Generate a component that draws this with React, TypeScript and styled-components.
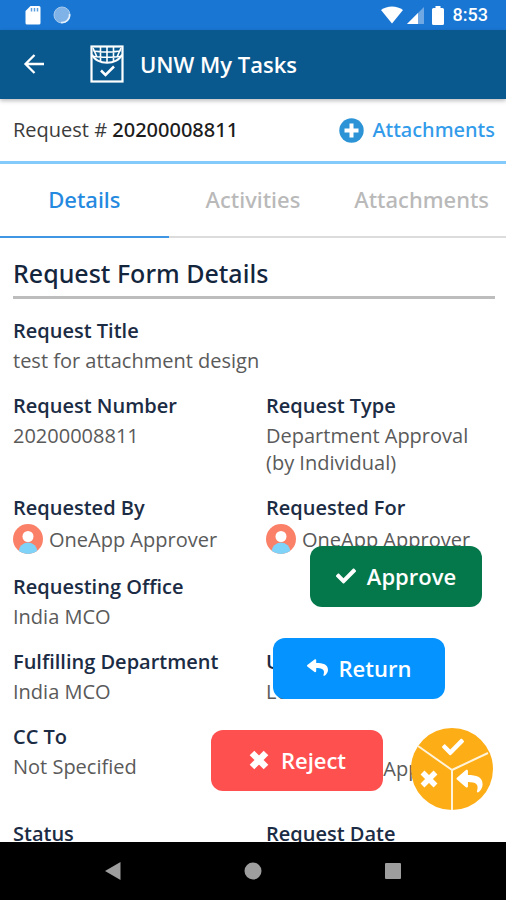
import React from 'react';
import styled, { createGlobalStyle } from 'styled-components';

const GlobalStyle = createGlobalStyle`
  *, *::before, *::after { box-sizing: border-box; }
  body { margin: 0; background: #fff; }
  button { border: 0; padding: 0; background: none; font: inherit; color: inherit; cursor: pointer; }
`;

const mediumFont = "'Noto Sans', 'Open Sans', sans-serif";

const Screen = styled.div`
  display: flex;
  flex-direction: column;
  height: 100vh;
  overflow: hidden;
  background: #fff;
  font-family: 'Open Sans', 'Noto Sans', sans-serif;
  color: #5a5a5a;
`;

const StatusBar = styled.div`
  flex: none;
  display: flex;
  align-items: center;
  justify-content: space-between;
  height: 30px;
  padding: 0 18px 0 25px;
  background: #1976d2;
  color: #fff;
`;

const StatusGroup = styled.div<{ $gap: number }>`
  display: flex;
  align-items: center;
  gap: ${({ $gap }) => $gap}px;
`;

const Clock = styled.time`
  padding-left: 5px;
  font: 500 18px/30px Roboto, sans-serif;
`;

const AppBar = styled.header`
  flex: none;
  position: relative;
  display: flex;
  align-items: center;
  height: 69px;
  padding: 0 20px 2px;
  background: #09588e;
  color: #fff;
  box-shadow: 0 2px 4px rgba(0, 0, 0, 0.25);
`;

const BackButton = styled.button`
  display: flex;
  padding: 3px;
  margin-right: 42px;
`;

const AppTitle = styled.h1`
  margin: 0 0 0 16px;
  font-size: 22px;
  line-height: 30px;
  font-weight: 600;
`;

const RequestBar = styled.div`
  flex: none;
  display: flex;
  align-items: center;
  justify-content: space-between;
  height: 65px;
  padding: 0 11px 0 13px;
  border-bottom: 3px solid #84cafa;
  font-size: 20px;
  line-height: 28px;
  color: #3c3c3c;
`;

const RequestId = styled.strong`
  font-family: ${mediumFont};
  font-weight: 500;
  color: #1c1c1c;
`;

const AddButton = styled.button`
  display: flex;
  align-items: center;
  gap: 8px;
  color: #329bea;
  font-family: ${mediumFont};
  font-weight: 500;
`;

const Tabs = styled.div`
  flex: none;
  display: grid;
  grid-template-columns: repeat(3, 1fr);
  height: 74px;
`;

const Tab = styled.button<{ $active?: boolean }>`
  padding-bottom: 2px;
  border-bottom: 2px solid ${({ $active }) => ($active ? '#3f97e3' : '#dcdcdc')};
  color: ${({ $active }) => ($active ? '#2489df' : '#b9b9b9')};
  font-family: ${mediumFont};
  font-size: 22px;
  line-height: 30px;
  font-weight: 500;
`;

const Body = styled.div`
  flex: 1;
  min-height: 0;
  position: relative;
`;

const Scroller = styled.main`
  height: 100%;
  overflow-y: auto;
  scrollbar-width: none;
  padding: 17px 11px 0 13px;
`;

const SectionTitle = styled.h2`
  margin: 0 0 18px;
  padding-bottom: 5px;
  border-bottom: 3px solid #bdbdbd;
  font-family: ${mediumFont};
  font-size: 25px;
  line-height: 36px;
  font-weight: 500;
  color: #14263d;
`;

const Fields = styled.dl`
  display: grid;
  grid-template-columns: 1fr 1fr;
  column-gap: 24px;
  row-gap: 18px;
  margin: 0;
`;

const Field = styled.div<{ $wide?: boolean; $minHeight?: number }>`
  grid-column: ${({ $wide }) => ($wide ? '1 / -1' : 'auto')};
  min-height: ${({ $minHeight = 0 }) => $minHeight}px;
`;

const Label = styled.dt`
  font-size: 20px;
  line-height: 27px;
  font-weight: 600;
  color: #1b2c44;
`;

const Value = styled.dd`
  display: flex;
  align-items: center;
  gap: 6px;
  margin: 3px 0 0;
  font-size: 20px;
  line-height: 27px;
  white-space: pre-line;
`;

const Actions = styled.div`
  position: absolute;
  right: 24px;
  bottom: 51px;
  display: flex;
  flex-direction: column;
  align-items: flex-end;
  gap: 31px;
`;

const ActionButton = styled.button<{ $color: string; $inset: number }>`
  display: flex;
  align-items: center;
  justify-content: center;
  gap: 11px;
  width: 172px;
  height: 61px;
  padding-bottom: 2px;
  margin-right: ${({ $inset }) => $inset}px;
  border-radius: 12px;
  background: ${({ $color }) => $color};
  color: #fff;
  font-size: 22px;
  line-height: 30px;
  font-weight: 600;
`;

const Fab = styled.button`
  position: absolute;
  right: 13px;
  bottom: 32px;
  display: flex;
  border-radius: 50%;
`;

const NavBar = styled.nav`
  flex: none;
  display: flex;
  align-items: center;
  justify-content: center;
  gap: 116px;
  height: 58px;
  background: #000;
  color: #9e9e9e;
`;

const NavButton = styled.button`
  display: flex;
  padding: 3px;
`;

const CHECK =
  'M173.9 439.4l-166.4-166.4c-10-10-10-26.2 0-36.2l36.2-36.2c10-10 26.2-10 36.2 0L192 312.7 432.1 72.6c10-10 26.2-10 36.2 0l36.2 36.2c10 10 10 26.2 0 36.2l-294.4 294.4c-10 10-26.2 10-36.2 0z';
const REPLY =
  'M8.3 189.8L184.3 37.9C199.7 24.5 224 35.3 224 56v80c160.600 1.800 288 34 288 186.300 0 61.400-39.600 122.300-83.300 154.100-13.700 9.900-33.100-2.500-28.100-18.600C445.900 312.900 379.100 274.400 224 272.100V360c0 20.700-24.300 31.500-39.700 18.200L8.300 226.200c-11.100-9.600-11.100-26.800 0-36.400z';

const CheckIcon = () => (
  <svg width="20" height="20" viewBox="0 0 512 512" fill="currentColor" aria-hidden="true">
    <path d={CHECK} />
  </svg>
);

const ReplyIcon = () => (
  <svg width="21" height="19" viewBox="0 0 512 512" preserveAspectRatio="none" fill="currentColor" aria-hidden="true">
    <path d={REPLY} />
  </svg>
);

const CrossIcon = () => (
  <svg width="22" height="22" viewBox="0 0 22 22" aria-hidden="true">
    <path d="M4 4L18 18M18 4L4 18" stroke="currentColor" strokeWidth="6.500" />
  </svg>
);

const Avatar = () => (
  <svg width="30" height="30" viewBox="0 0 30 30" aria-hidden="true">
    <defs>
      <clipPath id="avatar-disc">
        <circle cx="15" cy="15" r="15" />
      </clipPath>
    </defs>
    <g clipPath="url(#avatar-disc)">
      <rect width="30" height="30" fill="#fb8068" />
      <circle cx="15" cy="28" r="9.500" fill="#7fd3f8" />
      <circle cx="15" cy="12.500" r="5.500" fill="#fff" />
    </g>
  </svg>
);

const SdCardIcon = () => (
  <svg width="16" height="19" viewBox="0 0 16 19" aria-hidden="true">
    <path d="M5.500 0H14a1.500 1.500 0 0 1 1.500 1.500v15.500a1.500 1.500 0 0 1-1.500 1.500H2A1.500 1.500 0 0 1 .5 17V5z" fill="#fff" />
    <path d="M6.500 2v3.500M9.500 2v3.500M12.500 2v3.500" stroke="#5b9fe0" strokeWidth="1.500" />
  </svg>
);

const SyncDot = () => (
  <svg width="18" height="18" viewBox="0 0 18 18" aria-hidden="true">
    <circle cx="9" cy="9" r="8" fill="#7fb2e6" stroke="#a5caee" />
    <path d="M16.500 8A7.500 7.500 0 0 1 8 16.500" fill="none" stroke="#e4f0fb" strokeWidth="1.500" />
  </svg>
);

const WifiIcon = () => (
  <svg width="22" height="18" viewBox="0 0 22 18" aria-hidden="true">
    <path d="M0 4C6-.8 16-.8 22 4L11 17.500z" fill="#fff" />
  </svg>
);

const SignalIcon = () => (
  <svg width="17" height="17" viewBox="0 0 17 17" aria-hidden="true">
    <path d="M17 0v17H0z" fill="#6fa8e2" />
    <path d="M11 6v11H0z" fill="#fff" />
  </svg>
);

const BatteryIcon = () => (
  <svg width="12" height="19" viewBox="0 0 12 19" aria-hidden="true">
    <path d="M3.500 0h5v2H10.500a1.500 1.500 0 0 1 1.500 1.500v14a1.500 1.500 0 0 1-1.500 1.500H1.500a1.500 1.500 0 0 1-1.500-1.500V3.500a1.500 1.500 0 0 1 1.500-1.500h2z" fill="#fff" />
  </svg>
);

const BackIcon = () => (
  <svg width="22" height="22" viewBox="0 0 22 22" fill="none" aria-hidden="true">
    <path d="M21 11H3M11.500 2L2.500 11l9 9" stroke="currentColor" strokeWidth="2.300" />
  </svg>
);

const TasksLogo = () => (
  <svg width="34" height="38" viewBox="0 0 34 38" fill="none" stroke="#fff" aria-hidden="true">
    <rect x="1.500" y="1.500" width="31" height="35" strokeWidth="2.200" />
    <path d="M2 9.500C6 20.500 28 20.500 32 9.500" strokeWidth="2" />
    <path d="M3 5.500C10 7.500 24 7.500 31 5.500M4 11.500C10 12.500 24 12.500 30 11.500M17 2v15.500M10.500 2v14M23.500 2v14M3 3l4 9M31 3l-4 9" strokeWidth="1.600" />
    <path d="M11 25.500l4.500 4.500 8.500-8.500" strokeWidth="2.500" />
  </svg>
);

const PlusIcon = () => (
  <svg width="25" height="25" viewBox="0 0 25 25" aria-hidden="true">
    <circle cx="12.500" cy="12.500" r="12.200" fill="#2c94d6" />
    <path d="M12.500 5.500v14M5.500 12.500h14" stroke="#fff" strokeWidth="4" />
  </svg>
);

const ActionWheel = () => (
  <svg width="82" height="82" viewBox="0 0 82 82" aria-hidden="true">
    <circle cx="41" cy="41" r="41" fill="#fdad15" />
    <path d="M41 82V42L7 18M41 42l36-17" fill="none" stroke="#fff3da" strokeWidth="2" />
    <g fill="#fff">
      <path transform="translate(31 8) scale(.043)" d={CHECK} />
      <path transform="translate(45.500 40) scale(.051)" d={REPLY} />
    </g>
    <path d="M11.500 44.500l13 13M24.500 44.500l-13 13" stroke="#fff" strokeWidth="5.500" />
  </svg>
);

const Person = ({ name }: { name: string }) => (
  <>
    <Avatar />
    <span>{name}</span>
  </>
);

interface FieldData {
  label: string;
  value: React.ReactNode;
  wide?: boolean;
  minHeight?: number;
}

const person = <Person name="OneApp Approver" />;

const fields: FieldData[] = [
  { label: 'Request Title', value: 'test for attachment design', wide: true },
  { label: 'Request Number', value: '20200008811' },
  { label: 'Request Type', value: 'Department Approval\n(by Individual)' },
  { label: 'Requested By', value: person, minHeight: 61 },
  { label: 'Requested For', value: person, minHeight: 61 },
  { label: 'Requesting Office', value: 'India MCO', wide: true },
  { label: 'Fulfilling Department', value: 'India MCO' },
  { label: 'Urgency', value: 'Low' },
  { label: 'CC To', value: 'Not Specified', minHeight: 79 },
  { label: 'Owner', value: person, minHeight: 79 },
  { label: 'Status', value: '' },
  { label: 'Request Date', value: '' },
];

export default function App() {
  return (
    <Screen>
      <GlobalStyle />
      <StatusBar>
        <StatusGroup $gap={12}>
          <SdCardIcon />
          <SyncDot />
        </StatusGroup>
        <StatusGroup $gap={8}>
          <StatusGroup $gap={4}>
            <WifiIcon />
            <SignalIcon />
          </StatusGroup>
          <StatusGroup $gap={4}>
            <BatteryIcon />
            <Clock>8:53</Clock>
          </StatusGroup>
        </StatusGroup>
      </StatusBar>
      <AppBar>
        <BackButton aria-label="Back">
          <BackIcon />
        </BackButton>
        <TasksLogo />
        <AppTitle>UNW My Tasks</AppTitle>
      </AppBar>
      <RequestBar>
        <span>
          Request # <RequestId>20200008811</RequestId>
        </span>
        <AddButton>
          <PlusIcon />
          Attachments
        </AddButton>
      </RequestBar>
      <Tabs role="tablist">
        <Tab role="tab" aria-selected="true" $active>
          Details
        </Tab>
        <Tab role="tab" aria-selected="false">
          Activities
        </Tab>
        <Tab role="tab" aria-selected="false">
          Attachments
        </Tab>
      </Tabs>
      <Body>
        <Scroller>
          <SectionTitle>Request Form Details</SectionTitle>
          <Fields>
            {fields.map((f) => (
              <Field key={f.label} $wide={f.wide} $minHeight={f.minHeight}>
                <Label>{f.label}</Label>
                <Value>{f.value}</Value>
              </Field>
            ))}
          </Fields>
        </Scroller>
        <Actions>
          <ActionButton $color="#04784b" $inset={0}>
            <CheckIcon />
            Approve
          </ActionButton>
          <ActionButton $color="#0594ff" $inset={37}>
            <ReplyIcon />
            Return
          </ActionButton>
          <ActionButton $color="#ff5050" $inset={99}>
            <CrossIcon />
            Reject
          </ActionButton>
        </Actions>
        <Fab aria-label="Toggle actions">
          <ActionWheel />
        </Fab>
      </Body>
      <NavBar aria-label="System navigation">
        <NavButton aria-label="Back">
          <svg width="18" height="18" viewBox="0 0 18 18" fill="currentColor" aria-hidden="true">
            <path d="M16.500 0v18L1 9z" />
          </svg>
        </NavButton>
        <NavButton aria-label="Home">
          <svg width="18" height="18" viewBox="0 0 18 18" fill="currentColor" aria-hidden="true">
            <circle cx="9" cy="9" r="8.500" />
          </svg>
        </NavButton>
        <NavButton aria-label="Recent apps">
          <svg width="18" height="18" viewBox="0 0 18 18" fill="currentColor" aria-hidden="true">
            <rect x="1" y="1" width="16" height="16" rx="1" />
          </svg>
        </NavButton>
      </NavBar>
    </Screen>
  );
}
